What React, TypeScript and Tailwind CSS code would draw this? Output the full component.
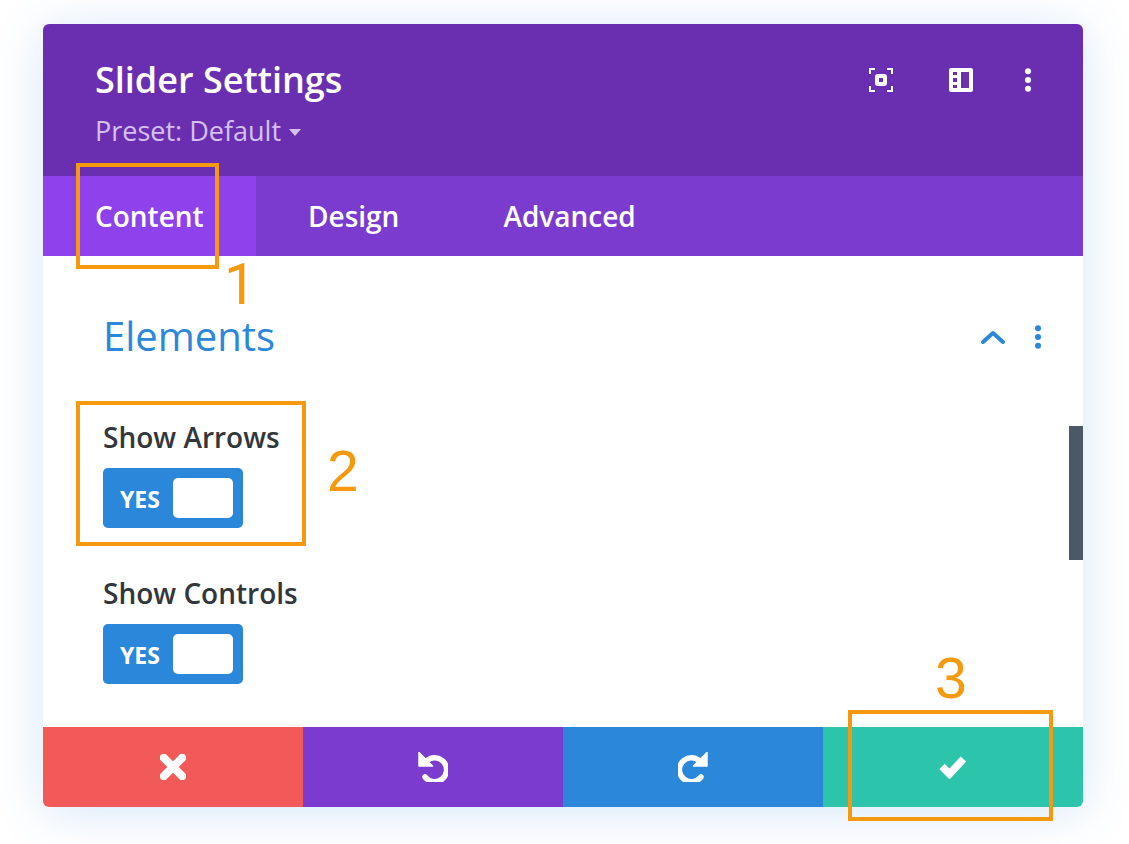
// Slider Settings modal with numbered callouts

const font = "font-['Open_Sans',sans-serif]";

function Dots({ className }: { className: string }) {
  return (
    <svg viewBox="0 0 8 24" className={className} fill="currentColor">
      <circle cx="4" cy="3.2" r="3" />
      <circle cx="4" cy="12" r="3" />
      <circle cx="4" cy="20.8" r="3" />
    </svg>
  );
}

function Toggle() {
  return (
    <div className="flex h-[60px] w-[140px] items-center justify-between rounded-[5px] bg-[#2b87da] pl-[17px] pr-[10px]">
      <span className="pt-[2px] text-[23px] font-bold leading-none text-white">YES</span>
      <div className="h-[40px] w-[60px] rounded-[5px] bg-white" />
    </div>
  );
}

function Callout({ className }: { className: string }) {
  return <div className={`absolute border-4 border-[#f7990f] ${className}`} />;
}

function Num({ className, children }: { className: string; children: string }) {
  return <span className={`absolute text-[57px] leading-[50px] text-[#f7990f] ${className}`}>{children}</span>;
}

function UndoIcon({ flip }: { flip?: boolean }) {
  return (
    <svg viewBox="0 0 30 30" className={`h-[30px] w-[30px] ${flip ? "-scale-x-100" : ""}`}>
      <path d="M9 8.500A12 12 0 1 1 7 25" fill="none" stroke="currentColor" strokeWidth="5.500" strokeLinecap="round" />
      <path d="M1 0.500 14.500 14 1 14Z" fill="currentColor" stroke="currentColor" strokeWidth="1.500" strokeLinejoin="round" />
    </svg>
  );
}

export default function App() {
  return (
    <div className={`relative h-[844px] w-[1129px] overflow-hidden bg-white pl-[43px] pt-[24px] ${font}`}>
      <div className="relative flex h-[783px] w-[1040px] flex-col overflow-hidden rounded-[6px] bg-white shadow-[0_5px_50px_rgba(43,135,218,0.2)]">
        {/* header */}
        <div className="flex h-[152px] shrink-0 items-start justify-between bg-[#6a2fb1] pl-[52px] pr-[51px]">
          <div>
            <div className="mt-[31px] text-[36px] font-semibold leading-[50px] text-white">Slider Settings</div>
            <div className="mt-[7px] flex items-center text-[27px] font-medium leading-[38px] text-[#d5c0f0]">
              Preset: Default
              <span className="ml-[8px] mt-[2px] h-0 w-0 border-x-[6px] border-t-[7px] border-x-transparent border-t-[#d5c0f0]" />
            </div>
          </div>
          <div className="mt-[44px] flex items-center">
            <svg viewBox="0 0 24 24" className="h-[24px] w-[24px] text-white" fill="none" stroke="currentColor" strokeWidth="2">
              <path d="M6 1H1v5M18 1h5v5M6 23H1v-5M18 23h5v-5" />
              <rect x="8" y="8" width="8" height="8" rx="1" strokeWidth="4" />
            </svg>
            <svg viewBox="0 0 24 24" className="ml-[56px] h-[24px] w-[24px] text-white" fill="currentColor">
              <path fillRule="evenodd" d="M2 0h20a2 2 0 0 1 2 2v20a2 2 0 0 1-2 2H2a2 2 0 0 1-2-2V2a2 2 0 0 1 2-2Zm2 4v3h4V4H4Zm0 6v4h4v-4H4Zm0 7v3h4v-3H4ZM12 4v16h8V4h-8Z" />
            </svg>
            <Dots className="ml-[51px] h-[24px] w-[8px] text-white" />
          </div>
        </div>

        {/* tabs */}
        <div className="flex h-[80px] shrink-0 items-center bg-[#7b3bcf] text-[28px] font-semibold text-white">
          <div className="flex h-full w-[213px] items-center bg-[#8f42ec] pl-[52px]">Content</div>
          <div className="ml-[52px]">Design</div>
          <div className="ml-[104px]">Advanced</div>
        </div>

        {/* body */}
        <div className="relative flex-1 pl-[60px]">
          <div className="flex items-center justify-between pr-[41px] pt-[56px]">
            <div className="-mt-[1px] text-[40px] leading-[50px] text-[#2b87da]">Elements</div>
            <div className="flex items-center">
              <svg viewBox="0 0 24 14" className="h-[14px] w-[24px] text-[#2b87da]" fill="none" stroke="currentColor" strokeWidth="4" strokeLinecap="round" strokeLinejoin="round">
                <path d="M2 12 12 3l10 9" />
              </svg>
              <Dots className="ml-[29px] h-[24px] w-[8px] text-[#2b87da]" />
            </div>
          </div>
          <div className="mt-[58px] text-[28px] font-semibold leading-[36px] text-[#32373c]">Show Arrows</div>
          <div className="mt-[13px]">
            <Toggle />
          </div>
          <div className="mt-[47px] text-[28px] font-semibold leading-[36px] text-[#32373c]">Show Controls</div>
          <div className="mt-[13px]">
            <Toggle />
          </div>
          <div className="absolute right-0 top-[170px] h-[134px] w-[14px] bg-[#4c5866]" />
        </div>

        {/* footer */}
        <div className="grid h-[80px] shrink-0 grid-cols-4 text-white">
          <div className="flex items-center justify-center bg-[#f25a5a]">
            <svg viewBox="0 0 26 26" className="h-[26px] w-[26px]" fill="currentColor">
              <rect x="-4" y="9" width="34" height="8" rx="1.500" transform="rotate(45 13 13)" />
              <rect x="-4" y="9" width="34" height="8" rx="1.500" transform="rotate(-45 13 13)" />
            </svg>
          </div>
          <div className="flex items-center justify-center bg-[#7b3bcf]">
            <UndoIcon />
          </div>
          <div className="flex items-center justify-center bg-[#2b87da]">
            <UndoIcon flip />
          </div>
          <div className="flex items-center justify-center bg-[#2cc4aa]">
            <svg viewBox="0 0 28 24" className="h-[24px] w-[28px]" fill="none" stroke="currentColor" strokeWidth="7.500">
              <path d="M3 11.500 10.500 19 24.500 4" />
            </svg>
          </div>
        </div>
      </div>

      <Callout className="left-[76px] top-[163px] h-[106px] w-[143px]" />
      <Callout className="left-[76px] top-[401px] h-[145px] w-[230px]" />
      <Callout className="left-[848px] top-[710px] h-[111px] w-[205px]" />
      <Num className="left-[224px] top-[260px] font-['Roboto',sans-serif]">1</Num>
      <Num className="left-[327px] top-[446px] font-['Liberation_Sans',sans-serif]">2</Num>
      <Num className="left-[935px] top-[653px] font-['Liberation_Sans',sans-serif]">3</Num>
    </div>
  );
}
